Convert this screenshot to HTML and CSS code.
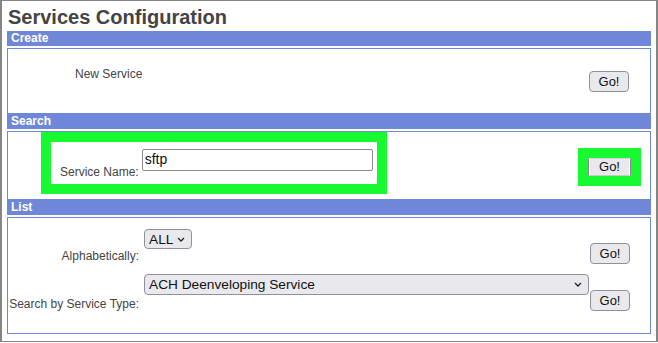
FILE: index.html
```html
<!DOCTYPE html>
<html lang="en">
<head>
    <meta charset="UTF-8">
    <meta name="viewport" content="width=device-width, initial-scale=1.0">
    <title>Services Configuration</title>
    <link rel="stylesheet" href="styles.css">
</head>
<body>

    <div class="frame">
        <h1>Services Configuration</h1>

        <div class="config">
            <div class="section-head">Create</div>
            <div class="section-body create">
                <span class="label create-label">New Service</span>
                <button class="go create-go">Go!</button>
            </div>

            <div class="section-head">Search</div>
            <div class="section-body search">
                <div class="highlight">
                    <div class="search-fields">
                        <label class="label" for="serviceName">Service Name:</label>
                        <input type="text" id="serviceName" value="sftp">
                    </div>
                </div>
                <div class="highlight highlight-btn">
                    <button class="go go-old">Go!</button>
                </div>
            </div>

            <div class="section-head">List</div>
            <div class="section-body list">
                <label class="label list-label row-one" for="alpha">Alphabetically:</label>
                <div class="select-wrap select-small row-one">
                    <select id="alpha">
                        <option>ALL</option>
                        <option>A</option>
                        <option>B</option>
                    </select>
                    <svg class="chevron" width="8" height="5" viewBox="0 0 8 5"><path d="M1 1l3 3 3-3" fill="none" stroke="#222" stroke-width="1.3"/></svg>
                </div>
                <button class="go list-go row-one">Go!</button>

                <label class="label list-label row-two" for="serviceType">Search by Service Type:</label>
                <div class="select-wrap select-wide row-two">
                    <select id="serviceType">
                        <option>ACH Deenveloping Service</option>
                        <option>ACH Enveloping Service</option>
                    </select>
                    <svg class="chevron" width="8" height="5" viewBox="0 0 8 5"><path d="M1 1l3 3 3-3" fill="none" stroke="#222" stroke-width="1.3"/></svg>
                </div>
                <button class="go list-go row-two">Go!</button>
            </div>
        </div>
    </div>

</body>
</html>
```

FILE: styles.css
```css
body {
    margin: 0;
    background-color: #fff;
    font-family: 'Liberation Sans', Arial, sans-serif;
    color: #444;
}

.frame {
    width: 658px;
    height: 342px;
    box-sizing: border-box;
    border-top: 1px solid #858585;
    border-left: 2px solid #858585;
    border-right: 2px solid #858585;
    border-bottom: 1px solid #858585;
    padding: 5px 5px 0 5px;
}

h1 {
    margin: 0 0 2px 1px;
    font-size: 20px;
    line-height: 23px;
    font-weight: bold;
    color: #444;
}

.config {
    width: 644px;
}

.section-head {
    height: 15px;
    line-height: 15px;
    background-color: #6f87d8;
    color: #fff;
    font-size: 12px;
    font-weight: bold;
    padding-left: 4px;
    margin-bottom: 2px;
}

.section-body {
    border: 1px solid #6f87d8;
    background-color: #fff;
}

.label {
    font-size: 12px;
    line-height: 14px;
    color: #444;
}

.go {
    font-family: 'Liberation Sans', Arial, sans-serif;
    font-size: 13px;
    color: #111;
    width: 40px;
    height: 21px;
    padding: 0;
    background-color: #e9e9ed;
    border: 1px solid #8f8f9d;
    border-radius: 4px;
}

/* create */
.create {
    display: flex;
    justify-content: space-between;
    align-items: flex-start;
    padding: 0 21px 21px 0;
}

.create-label {
    margin: 18px 0 0 67px;
}

.create-go {
    margin-top: 22px;
}

/* search */
.search {
    display: flex;
    justify-content: space-between;
    align-items: flex-start;
    padding: 0 9px 5px 33px;
}

.highlight {
    border: 10px solid #17f930;
}

.search-fields {
    display: flex;
    align-items: flex-end;
    width: 326px;
    box-sizing: border-box;
    padding: 7px 4px 0 9px;
}

.search-fields .label {
    margin-bottom: 5px;
    margin-right: 3px;
}

.search-fields input {
    width: 231px;
    height: 22px;
    box-sizing: border-box;
    margin: 0 0 13px 0;
    padding: 0 2px 3px 2px;
    border: 1px solid #8a8a8a;
    border-radius: 2px;
    font-family: 'Liberation Sans', Arial, sans-serif;
    font-size: 14px;
    color: #111;
    outline: none;
}

.highlight-btn {
    margin-top: 16px;
    padding: 0;
}

.go-old {
    display: block;
    width: 43px;
    height: 18px;
    border-radius: 0;
    border-top: 1px solid #d8d8dc;
    border-bottom: 1px solid #c8c8cc;
    border-left: 1px solid #8a8a8a;
    border-right: 1px solid #8a8a8a;
    box-shadow: inset 1px 0 #fff, inset -1px 0 #fff;
    line-height: 16px;
}

/* list */
.list {
    display: grid;
    grid-template-columns: 135px 445px 40px;
    grid-template-rows: 37px 39px;
    column-gap: 1px;
    row-gap: 8px;
    padding: 10px 21px 21px 0;
}

.list-label {
    align-self: end;
    text-align: right;
    padding-right: 4px;
}

.row-one.list-label {
    margin-bottom: 2px;
}

.row-two.list-label {
    margin-bottom: 1px;
}

.list-go {
    align-self: end;
    margin-bottom: 1px;
}

.select-wrap {
    position: relative;
    margin-top: 1px;
    align-self: start;
}

.select-wrap select {
    appearance: none;
    -webkit-appearance: none;
    display: block;
    width: 100%;
    box-sizing: border-box;
    margin: 0;
    padding: 0 0 0 4px;
    background-color: #e9e9ed;
    border: 1px solid #8f8f9d;
    border-radius: 4px;
    font-family: 'Liberation Sans', Arial, sans-serif;
    font-size: 13.7px;
    color: #111;
}

.select-small {
    width: 48px;
}

.select-small select {
    height: 20px;
}

.select-wide {
    width: 445px;
}

.select-wide select {
    height: 21px;
}

.chevron {
    position: absolute;
    right: 7px;
    top: 8px;
    pointer-events: none;
}
```
